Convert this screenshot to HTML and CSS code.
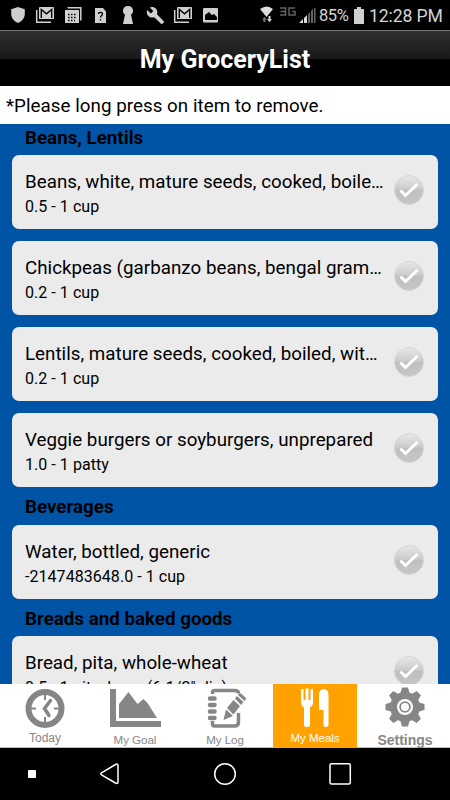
FILE: index.html
```html
<!DOCTYPE html>
<html lang="en">
<head>
    <meta charset="UTF-8">
    <meta name="viewport" content="width=device-width, initial-scale=1.0">
    <title>My GroceryList</title>
    <link rel="stylesheet" href="styles.css">
</head>
<body>

    <!-- gradient and tick shared by every list item -->
    <svg width="0" height="0" class="defs">
        <defs>
            <linearGradient id="tickFill" x1="0" y1="0" x2="0" y2="1">
                <stop offset="0" stop-color="#e8e8e8"/>
                <stop offset="0.47" stop-color="#cbcbcb"/>
                <stop offset="0.5" stop-color="#bfbfbf"/>
                <stop offset="1" stop-color="#c6c6c6"/>
            </linearGradient>
            <symbol id="tick" viewBox="0 0 32 32">
                <circle cx="16" cy="16" r="14.5" fill="url(#tickFill)" stroke="#d6d6d6"/>
                <path d="M7.5 16.5l5 5L24.5 10" fill="none" stroke="#fff" stroke-width="3"/>
            </symbol>
            <symbol id="mail" viewBox="0 0 20 18">
                <path d="M1.7 4v12.3H16" fill="none" stroke="#cfcfcf" stroke-width="1.5"/>
                <path d="M5 1h13a1 1 0 0 1 1 1v11H4V2a1 1 0 0 1 1-1z" fill="#cfcfcf"/>
                <path d="M6.3 12V3.5l5.2 4.3 5.2-4.3V12" fill="none" stroke="#000" stroke-width="1.4"/>
            </symbol>
        </defs>
    </svg>

    <div class="status-bar">
        <svg class="status-icons" width="225" height="30" viewBox="0 0 225 30" fill="#cfcfcf">
            <path d="M18 7l6.8 2.3V14c0 4-2.8 7.3-6.8 9-4-1.7-6.8-5-6.8-9V9.3z"/>
            <use href="#mail" x="35" y="6" width="20" height="18"/>
            <path d="M67.5 7.7h13.3v12.8" fill="none" stroke="#cfcfcf" stroke-width="1.5"/>
            <path d="M65 10h14v13H65z"/>
            <path d="M68 14.5h9M68 17.5h9M68 20.5h7" stroke="#000" stroke-width="1.5" stroke-dasharray="1.5 1.5"/>
            <path d="M95 8h8l3 3.5V23H95z"/>
            <path d="M98.5 14c0-2.3 4-2.3 4 0 0 1.6-2 1.5-2 3.5M100.5 19v1.5" fill="none" stroke="#000" stroke-width="1.3"/>
            <path d="M128 6a4.8 4.8 0 0 1 3 8.7l2 9.3h-10l2-9.3A4.8 4.8 0 0 1 128 6z"/>
            <path d="M164 21.5l-7-7.2c.8-2 .3-4.2-1.2-5.8-1.6-1.6-4-2-6-1l3.5 3.5-2.5 2.4-3.5-3.5c-1 2-.5 4.5 1.1 6.1 1.6 1.6 3.8 1.9 5.8 1.2l6.8 6.6c.5.5 1 .5 1.4 0l1.6-1.5c.4-.3.4-.5 0-.8z"/>
            <use href="#mail" x="173" y="6" width="20" height="18"/>
            <rect x="203" y="8" width="15" height="14.5" rx="1"/>
            <path d="M205 20v-5l4-3 3 3 2-1 3 3v3z" fill="#000"/>
        </svg>
        <svg class="status-icons" width="92" height="30" viewBox="0 0 92 30" fill="#dcdcdc">
            <path d="M35 9q7-5 13 0l-6.5 8z"/>
            <path d="M39.5 17l2.2 2.5h-1.3V22h-2v-2.5H37z" fill="#777"/>
            <path d="M44.5 22l-2.5-2.7h1.5V16h2v3.3H47z"/>
            <path d="M55 8h5.5v7H55M55.500 11.500h5M70 8h-6v7h6v-3.500h-3" fill="none" stroke="#606060" stroke-width="1.5"/>
            <path d="M74 23l4-4v4zM79 18l3-3v8h-3z"/>
            <path d="M83 14l2-2v11h-2zM86 11l2-2v14h-2zM89 9l1.500-1.500V23H89z" fill="#666"/>
        </svg>
        <span class="battery-text">85%</span>
        <svg class="battery" width="10" height="17" viewBox="0 0 10 17" fill="#d0d0d0">
            <path d="M3 0h4v2h3v15H0V2h3z"/>
        </svg>
        <span class="clock">12:28 PM</span>
    </div>

    <div class="header">
        <h1>My GroceryList</h1>
    </div>

    <p class="notice">*Please long press on item to remove.</p>

    <div class="list">
        <h2>Beans, Lentils</h2>
        <div class="item">
            <div class="item-text">
                <div class="name">Beans, white, mature seeds, cooked, boile…</div>
                <div class="amount">0.5 - 1 cup</div>
            </div>
            <svg class="tick"><use href="#tick"/></svg>
        </div>
        <div class="item">
            <div class="item-text">
                <div class="name">Chickpeas (garbanzo beans, bengal gram…</div>
                <div class="amount">0.2 - 1 cup</div>
            </div>
            <svg class="tick"><use href="#tick"/></svg>
        </div>
        <div class="item">
            <div class="item-text">
                <div class="name">Lentils, mature seeds, cooked, boiled, wit…</div>
                <div class="amount">0.2 - 1 cup</div>
            </div>
            <svg class="tick"><use href="#tick"/></svg>
        </div>
        <div class="item">
            <div class="item-text">
                <div class="name">Veggie burgers or soyburgers, unprepared</div>
                <div class="amount">1.0 - 1 patty</div>
            </div>
            <svg class="tick"><use href="#tick"/></svg>
        </div>

        <h2>Beverages</h2>
        <div class="item">
            <div class="item-text">
                <div class="name">Water, bottled, generic</div>
                <div class="amount">-2147483648.0 - 1 cup</div>
            </div>
            <svg class="tick"><use href="#tick"/></svg>
        </div>

        <h2>Breads and baked goods</h2>
        <div class="item">
            <div class="item-text">
                <div class="name">Bread, pita, whole-wheat</div>
                <div class="amount">0.5 - 1 pita, large (6-1/2" dia)</div>
            </div>
            <svg class="tick"><use href="#tick"/></svg>
        </div>
    </div>

    <div class="tabs">
        <div class="tab today">
            <svg width="90" height="46" viewBox="0 0 90 46" fill="none" stroke="#868686">
                <circle cx="45" cy="24.5" r="16.5" stroke-width="6"/>
                <path d="M45 10v6M45 33v6M31 24.5h5M54 24.5h5" stroke-width="2"/>
                <path d="M50.5 16.5l-6 8 4.500 7" stroke-width="3.5" stroke-linecap="round"/>
            </svg>
            <span>Today</span>
        </div>
        <div class="tab goal">
            <svg width="90" height="46" viewBox="0 0 90 46" fill="#868686">
                <path d="M20 5h6v32h45v6H20z"/>
                <path d="M29 34V20l9.5-12 9 12 6-5 4 4 9.5 15z"/>
            </svg>
            <span>My Goal</span>
        </div>
        <div class="tab log">
            <svg width="90" height="46" viewBox="0 0 90 46" fill="none" stroke="#868686">
                <path d="M32.500 10V8.500q0-2 2-2h20q4 0 4 3M32.500 37v3q0 2 2 2h20q4 0 4-4v-9" stroke-width="3.5"/>
                <path d="M30 14.500h4.500M30 21h4.500M30 27.500h4.500M30 34h4.500" stroke-width="4.5" stroke-linecap="round"/>
                <path d="M42.500 36l2.500-10.500 7 6.500zM46 24l6.500-8 6.500 6-6.500 8.500zM54 14.500l2-2.500 6.500 6-2.500 3zM57 11l1-1.500h2l5 4.500-.5 2-1 1z" transform="translate(1)" fill="#868686" stroke="none"/>
            </svg>
            <span>My Log</span>
        </div>
        <div class="tab meals active">
            <svg width="84" height="46" viewBox="0 0 84 46" fill="#fff">
                <path d="M28 5h2.500v11h2V4.500h3V16h2V5H40v13q0 4-3 5.500V41q0 2-3 2t-3-2V23.500Q28 22 28 18z"/>
                <path d="M46 11q0-6 5-6 4.500 0 4.500 7v29q0 2-2.500 2t-2.500-2V26H46z"/>
            </svg>
            <span>My Meals</span>
        </div>
        <div class="tab settings">
            <svg width="90" height="46" viewBox="0 0 90 46">
                <g transform="translate(45 23)" fill="#868686">
                    <circle r="15"/>
                    <path id="teeth" d="M-4.500-14l1.500-5.500h6L4.500-14v28L3 19.500h-6L-4.500 14zM-14-4.500l-5.500 1.500v6l5.500 1.500h28L19.500 3v-6L14-4.500z"/>
                    <use href="#teeth" transform="rotate(45)"/>
                    <circle r="6.9" stroke="#fff" stroke-width="2.2"/>
                    <circle r="4" fill="#fff"/>
                </g>
            </svg>
            <span>Settings</span>
        </div>
    </div>

    <div class="nav-bar">
        <svg width="450" height="52" viewBox="0 0 450 52" fill="none" stroke="#fff" stroke-width="1.5">
            <rect x="28" y="22" width="8" height="8" rx="1" fill="#fff" stroke="none"/>
            <path d="M101.5 24.800l14-8.300q2.500-1.200 2.500 1v16.500q0 2.200-2.500 1l-14-8.200q-1.500-1 0-2z"/>
            <circle cx="225" cy="26" r="10.3"/>
            <rect x="330" y="15.7" width="20.3" height="20.3" rx="1.5"/>
        </svg>
    </div>

</body>
</html>
```

FILE: styles.css
```css
* {
    box-sizing: border-box;
}
body {
    margin: 0;
    width: 450px;
    height: 800px;
    display: flex;
    flex-direction: column;
    overflow: hidden;
    font-family: Roboto, sans-serif;
    background: #000;
    color: #000;
}
.defs {
    position: absolute;
}
.status-bar {
    display: flex;
    align-items: center;
    height: 30px;
    flex: none;
    color: #d4d4d4;
    white-space: nowrap;
}
.status-icons {
    flex: none;
}
.battery-text {
    width: 32px;
    margin-left: 2px;
    font-size: 16.5px;
    letter-spacing: -0.4px;
    padding-top: 1px;
}
.battery {
    margin: 0 5px 0 3px;
}
.clock {
    font-size: 17.6px;
    letter-spacing: -0.1px;
    padding-top: 1px;
}
.header {
    height: 56px;
    flex: none;
    border-top: 1px solid #777;
    background: linear-gradient(#303030, #191919 50%, #000 50%);
}
h1 {
    margin: 0;
    color: #fff;
    font-size: 25px;
    line-height: 58px;
    text-align: center;
}
.notice {
    margin: 0;
    height: 38px;
    flex: none;
    padding-left: 6px;
    background: #fff;
    font-size: 18.75px;
    line-height: 41px;
    letter-spacing: 0.04px;
}
.list {
    height: 560px;
    flex: none;
    overflow: hidden;
    background: #0054a6;
}
h2 {
    margin: 0;
    height: 25.3px;
    padding-left: 25px;
    font-size: 18.75px;
    line-height: 28px;
}
.item {
    display: flex;
    height: 74px;
    margin: 6px 12px 12px;
    padding: 0 0 0 13px;
    background: #ebebeb;
    border-radius: 7px;
}
.item:has(+ h2) {
    margin-bottom: 6px;
}
.item-text {
    width: 364px;
    flex: none;
    padding-top: 14px;
}
.item + .item {
    margin-top: 0;
}
.name {
    white-space: nowrap;
    font-size: 18.75px;
    line-height: 26px;
    letter-spacing: 0.02px;
}
.amount {
    font-size: 16px;
    line-height: 23px;
    letter-spacing: 0.05px;
}
.tick {
    width: 32px;
    height: 32px;
    flex: none;
    margin: 19px 0 0 4px;
}
.tabs {
    display: flex;
    height: 64px;
    flex: none;
    background: #fff;
    border-bottom: 1px solid #bbb;
    font-family: "Liberation Sans", Arial, sans-serif;
    font-size: 11.5px;
    line-height: 16px;
    color: #868686;
}
.tab {
    width: 90px;
    display: flex;
    flex-direction: column;
    align-items: center;
}
.tab svg {
    flex: none;
}
.today {
    font-size: 12px;
}
.goal span, .log span {
    margin-top: 2px;
}
.active {
    width: 84px;
    height: 64px;
    margin: 0 3px;
    background: #ffa200;
    color: #fff;
}
.settings {
    font-size: 14px;
    font-weight: bold;
}
.settings span {
    margin-top: 2px;
}
.nav-bar {
    height: 52px;
    flex: none;
}
```
